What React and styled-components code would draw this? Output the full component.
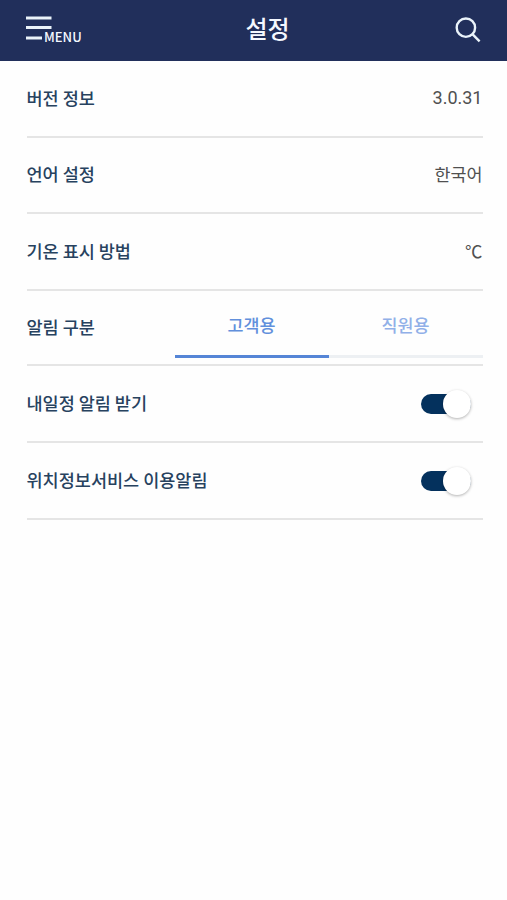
import { useState } from "react";
import styled, { createGlobalStyle } from "styled-components";

export default function App() {
    const [tab, setTab] = useState("customer");
    const [schedule, setSchedule] = useState(true);
    const [location, setLocation] = useState(true);

    return (
        <>
            <GlobalStyle />
            <Header>
                <MenuButton type="button">
                    <MenuIcon viewBox="0 0 26 26">
                        <path d="M0 2H25.5M0 11.5H25.5M0 22H16" />
                    </MenuIcon>
                    <MenuLabel>MENU</MenuLabel>
                </MenuButton>
                <Title>설정</Title>
                <SearchButton type="button" aria-label="검색">
                    <svg viewBox="0 0 26 26" width="26" height="26">
                        <circle cx="10.9" cy="10.7" r="9.2" />
                        <path d="M17.4 17.2L24.6 24.4" />
                    </svg>
                </SearchButton>
            </Header>
            <List>
                <Row>
                    <Label>버전 정보</Label>
                    <Version>3.0.31</Version>
                </Row>
                <Row $height={76}>
                    <Label>언어 설정</Label>
                    <Value>한국어</Value>
                </Row>
                <Row>
                    <Label>기온 표시 방법</Label>
                    <Value>℃</Value>
                </Row>
                <Row $height={75}>
                    <Label>알림 구분</Label>
                    <Tabs>
                        <Tab type="button" $active={tab === "customer"} onClick={() => setTab("customer")}>고객용</Tab>
                        <Tab type="button" $active={tab === "staff"} onClick={() => setTab("staff")}>직원용</Tab>
                    </Tabs>
                </Row>
                <Row>
                    <Label>내일정 알림 받기</Label>
                    <Switch type="button" role="switch" aria-checked={schedule} $on={schedule} onClick={() => setSchedule(!schedule)}>
                        <Knob />
                    </Switch>
                </Row>
                <Row>
                    <Label>위치정보서비스 이용알림</Label>
                    <Switch type="button" role="switch" aria-checked={location} $on={location} onClick={() => setLocation(!location)}>
                        <Knob />
                    </Switch>
                </Row>
            </List>
        </>
    );
}

const GlobalStyle = createGlobalStyle`
    * {
        box-sizing: border-box;
    }

    body {
        margin: 0;
        background: #fefefe;
        font-family: "Noto Sans CJK KR", sans-serif;
    }

    button {
        padding: 0;
        border: 0;
        background: none;
        font-family: inherit;
        cursor: pointer;
    }
`;
const Header = styled.header`
    display: grid;
    grid-template-columns: 1fr auto 1fr;
    height: 61px;
    padding: 0 25px 0 26px;
    background: #212f5b;
    color: #f4f8ff;
`;
const MenuButton = styled.button`
    display: flex;
    align-items: flex-start;
    padding-top: 16px;
    color: inherit;
`;
const MenuIcon = styled.svg`
    width: 26px;
    height: 26px;
    flex: none;
    fill: none;
    stroke: #eaf3fa;
    stroke-width: 3;
`;
const MenuLabel = styled.span`
    margin: 13px 0 0 -8px;
    font-size: 13px;
    font-weight: 500;
    line-height: 16px;
`;
const Title = styled.h1`
    margin: 0;
    padding: 10px 0 0 27px;
    font-size: 24px;
    font-weight: 500;
    line-height: 36px;
    white-space: nowrap;
`;
const SearchButton = styled.button`
    justify-self: end;
    align-self: start;
    height: 26px;
    margin: 17px 1px 0 0;

        svg {
            display: block;
            fill: none;
            stroke: #eaf3fa;
            stroke-width: 2.4;
        }
`;
const List = styled.main`
    padding: 0 24.5px 0 26.5px;
`;
const Row = styled.div`
    display: flex;
    align-items: center;
    justify-content: space-between;
    height: ${({ $height }) => $height || 77}px;
    border-bottom: 2px solid #e5e5e5;
`;
const Label = styled.span`
    padding-bottom: 2px;
    color: #27425f;
    font-size: 17.5px;
    font-weight: 500;
    line-height: 26px;
`;
const Value = styled.span`
    padding-bottom: 2px;
    color: #505050;
    font-size: 17.4px;
    line-height: 26px;
`;
const Version = styled(Value)`
    font-family: Roboto, sans-serif;
    font-size: 18px;
`;
const Tabs = styled.div`
    display: flex;
    align-self: stretch;
    width: 308px;
    padding-bottom: 6.5px;
`;
const Tab = styled.button`
    flex: 1;
    padding-top: 3px;
    border-bottom: 3px solid ${({ $active }) => ($active ? "#5585d6" : "#edf0f3")};
    color: ${({ $active }) => ($active ? "#6290dc" : "#91b0e8")};
    font-size: 17.4px;
    font-weight: 500;
`;
const Switch = styled.button`
    display: flex;
    align-items: center;
    justify-content: ${({ $on }) => ($on ? "flex-end" : "flex-start")};
    width: 50px;
    height: 20px;
    margin-right: 11.5px;
    border-radius: 10px;
    background: ${({ $on }) => ($on ? "#04315d" : "#bbb")};
`;
const Knob = styled.span`
    flex: none;
    width: 28px;
    height: 28px;
    border-radius: 50%;
    background: #fff;
    box-shadow: 0 1px 3px rgba(0, 0, 0, 0.3);
`;
